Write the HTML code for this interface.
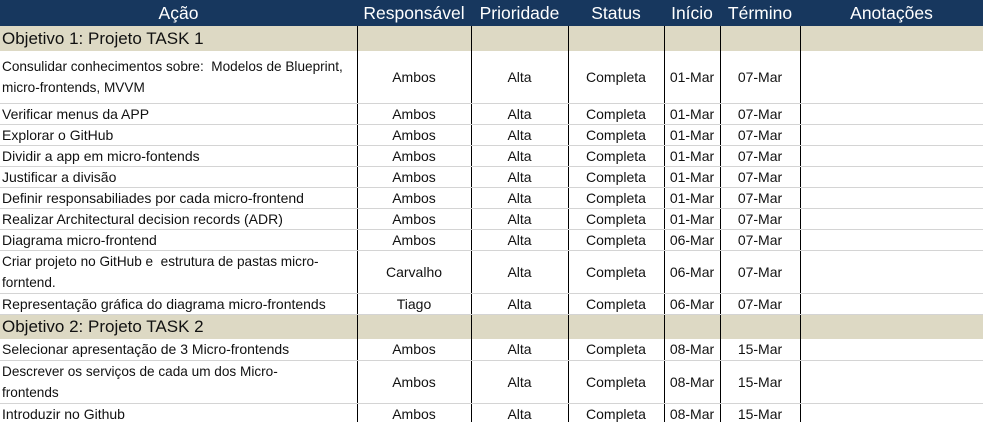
<!DOCTYPE html>
<html><head><meta charset="utf-8"><style>
html,body{margin:0;padding:0;background:#fff;width:983px;height:422px;overflow:hidden}
table{border-collapse:collapse;table-layout:fixed;width:983px;font-family:"Liberation Sans",sans-serif;font-size:14px;color:#111}
td{padding:0;border-bottom:1px solid #d4d4d4;border-left:1px solid #000;text-align:center;vertical-align:middle;line-height:20px;overflow:hidden;white-space:nowrap}
td:first-child{border-left:none;text-align:left;padding-left:2px}
td.w{line-height:21px;font-size:13.6px}
tr.h td{background:#17375e;color:#fff;font-size:17.5px;border:none;height:26px;line-height:26px;text-align:center;padding:0}
tr.o td{background:#ddd9c4;font-size:17px;border-bottom:none}
</style></head><body>
<table>
<colgroup><col style="width:357px"><col style="width:114px"><col style="width:97px"><col style="width:96px"><col style="width:56px"><col style="width:80px"><col style="width:183px"></colgroup>
<tr class="h"><td>Ação</td><td>Responsável</td><td>Prioridade</td><td>Status</td><td>Início</td><td>Término</td><td>Anotações</td></tr>
<tr class="o" style="height:25px"><td>Objetivo 1: Projeto TASK 1</td><td></td><td></td><td></td><td></td><td></td><td></td></tr>
<tr style="height:52px"><td class="w">Consulidar conhecimentos sobre:&nbsp; Modelos de Blueprint,<br>micro-frontends, MVVM</td><td>Ambos</td><td>Alta</td><td>Completa</td><td>01-Mar</td><td>07-Mar</td><td></td></tr>
<tr style="height:21px"><td>Verificar menus da APP</td><td>Ambos</td><td>Alta</td><td>Completa</td><td>01-Mar</td><td>07-Mar</td><td></td></tr>
<tr style="height:21px"><td>Explorar o GitHub</td><td>Ambos</td><td>Alta</td><td>Completa</td><td>01-Mar</td><td>07-Mar</td><td></td></tr>
<tr style="height:21px"><td>Dividir a app em micro-fontends</td><td>Ambos</td><td>Alta</td><td>Completa</td><td>01-Mar</td><td>07-Mar</td><td></td></tr>
<tr style="height:21px"><td>Justificar a divisão</td><td>Ambos</td><td>Alta</td><td>Completa</td><td>01-Mar</td><td>07-Mar</td><td></td></tr>
<tr style="height:21px"><td>Definir responsabiliades por cada micro-frontend</td><td>Ambos</td><td>Alta</td><td>Completa</td><td>01-Mar</td><td>07-Mar</td><td></td></tr>
<tr style="height:21px"><td>Realizar Architectural decision records (ADR)</td><td>Ambos</td><td>Alta</td><td>Completa</td><td>01-Mar</td><td>07-Mar</td><td></td></tr>
<tr style="height:21px"><td>Diagrama micro-frontend</td><td>Ambos</td><td>Alta</td><td>Completa</td><td>06-Mar</td><td>07-Mar</td><td></td></tr>
<tr style="height:42px"><td class="w">Criar projeto no GitHub e&nbsp; estrutura de pastas micro-<br>forntend.</td><td>Carvalho</td><td>Alta</td><td>Completa</td><td>06-Mar</td><td>07-Mar</td><td></td></tr>
<tr style="height:21px"><td>Representação gráfica do diagrama micro-frontends</td><td>Tiago</td><td>Alta</td><td>Completa</td><td>06-Mar</td><td>07-Mar</td><td></td></tr>
<tr class="o" style="height:25px"><td>Objetivo 2: Projeto TASK 2</td><td></td><td></td><td></td><td></td><td></td><td></td></tr>
<tr style="height:21px"><td>Selecionar apresentação de 3 Micro-frontends</td><td>Ambos</td><td>Alta</td><td>Completa</td><td>08-Mar</td><td>15-Mar</td><td></td></tr>
<tr style="height:42px"><td class="w">Descrever os serviços de cada um dos Micro-<br>frontends</td><td>Ambos</td><td>Alta</td><td>Completa</td><td>08-Mar</td><td>15-Mar</td><td></td></tr>
<tr style="height:21px"><td>Introduzir no Github</td><td>Ambos</td><td>Alta</td><td>Completa</td><td>08-Mar</td><td>15-Mar</td><td></td></tr>
</table>
</body></html>
